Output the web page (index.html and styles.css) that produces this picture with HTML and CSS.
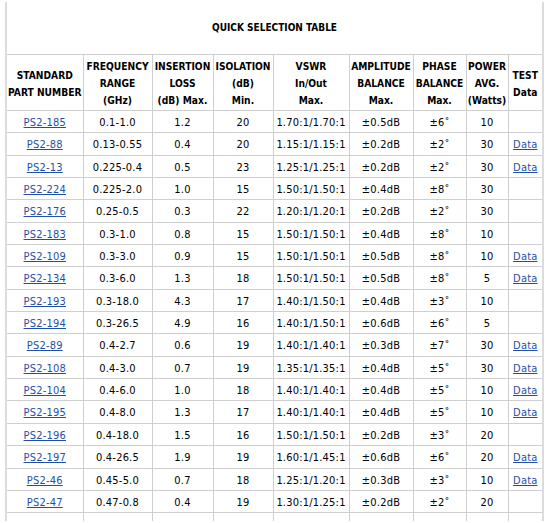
FILE: index.html
```html
<!DOCTYPE html>
<html>
<head>
<meta charset="utf-8">
<link rel="stylesheet" href="styles.css">
</head>
<body>
<div class="wrap">
<table class="qst">
  <colgroup>
    <col class="c1"><col class="c2"><col class="c3"><col class="c4"><col class="c5"><col class="c6"><col class="c7"><col class="c8"><col class="c9">
  </colgroup>
  <tr class="title"><td colspan="9">QUICK SELECTION TABLE</td></tr>
  <tr class="head">
    <th>STANDARD<br>PART NUMBER</th>
    <th>FREQUENCY<br>RANGE<br>(GHz)</th>
    <th>INSERTION<br>LOSS<br>(dB) Max.</th>
    <th>ISOLATION<br>(dB)<br>Min.</th>
    <th>VSWR<br>In/Out<br>Max.</th>
    <th>AMPLITUDE<br>BALANCE<br>Max.</th>
    <th>PHASE<br>BALANCE<br>Max.</th>
    <th>POWER<br>AVG.<br>(Watts)</th>
    <th>TEST<br>Data</th>
  </tr>
  <tr><td><a href="#">PS2-185</a></td><td>0.1-1.0</td><td>1.2</td><td>20</td><td>1.70:1/1.70:1</td><td>±0.5dB</td><td>±6˚</td><td>10</td><td></td></tr>
  <tr><td><a href="#">PS2-88</a></td><td>0.13-0.55</td><td>0.4</td><td>20</td><td>1.15:1/1.15:1</td><td>±0.2dB</td><td>±2˚</td><td>30</td><td><a href="#">Data</a></td></tr>
  <tr><td><a href="#">PS2-13</a></td><td>0.225-0.4</td><td>0.5</td><td>23</td><td>1.25:1/1.25:1</td><td>±0.2dB</td><td>±2˚</td><td>30</td><td><a href="#">Data</a></td></tr>
  <tr><td><a href="#">PS2-224</a></td><td>0.225-2.0</td><td>1.0</td><td>15</td><td>1.50:1/1.50:1</td><td>±0.4dB</td><td>±8˚</td><td>30</td><td></td></tr>
  <tr><td><a href="#">PS2-176</a></td><td>0.25-0.5</td><td>0.3</td><td>22</td><td>1.20:1/1.20:1</td><td>±0.2dB</td><td>±2˚</td><td>30</td><td></td></tr>
  <tr><td><a href="#">PS2-183</a></td><td>0.3-1.0</td><td>0.8</td><td>15</td><td>1.50:1/1.50:1</td><td>±0.4dB</td><td>±8˚</td><td>10</td><td></td></tr>
  <tr><td><a href="#">PS2-109</a></td><td>0.3-3.0</td><td>0.9</td><td>15</td><td>1.50:1/1.50:1</td><td>±0.5dB</td><td>±8˚</td><td>10</td><td><a href="#">Data</a></td></tr>
  <tr><td><a href="#">PS2-134</a></td><td>0.3-6.0</td><td>1.3</td><td>18</td><td>1.50:1/1.50:1</td><td>±0.5dB</td><td>±8˚</td><td>5</td><td><a href="#">Data</a></td></tr>
  <tr><td><a href="#">PS2-193</a></td><td>0.3-18.0</td><td>4.3</td><td>17</td><td>1.40:1/1.50:1</td><td>±0.4dB</td><td>±3˚</td><td>10</td><td></td></tr>
  <tr><td><a href="#">PS2-194</a></td><td>0.3-26.5</td><td>4.9</td><td>16</td><td>1.40:1/1.50:1</td><td>±0.6dB</td><td>±6˚</td><td>5</td><td></td></tr>
  <tr><td><a href="#">PS2-89</a></td><td>0.4-2.7</td><td>0.6</td><td>19</td><td>1.40:1/1.40:1</td><td>±0.3dB</td><td>±7˚</td><td>30</td><td><a href="#">Data</a></td></tr>
  <tr><td><a href="#">PS2-108</a></td><td>0.4-3.0</td><td>0.7</td><td>19</td><td>1.35:1/1.35:1</td><td>±0.4dB</td><td>±5˚</td><td>30</td><td><a href="#">Data</a></td></tr>
  <tr><td><a href="#">PS2-104</a></td><td>0.4-6.0</td><td>1.0</td><td>18</td><td>1.40:1/1.40:1</td><td>±0.4dB</td><td>±5˚</td><td>10</td><td><a href="#">Data</a></td></tr>
  <tr><td><a href="#">PS2-195</a></td><td>0.4-8.0</td><td>1.3</td><td>17</td><td>1.40:1/1.40:1</td><td>±0.4dB</td><td>±5˚</td><td>10</td><td><a href="#">Data</a></td></tr>
  <tr><td><a href="#">PS2-196</a></td><td>0.4-18.0</td><td>1.5</td><td>16</td><td>1.50:1/1.50:1</td><td>±0.2dB</td><td>±3˚</td><td>20</td><td></td></tr>
  <tr><td><a href="#">PS2-197</a></td><td>0.4-26.5</td><td>1.9</td><td>19</td><td>1.60:1/1.45:1</td><td>±0.6dB</td><td>±6˚</td><td>20</td><td><a href="#">Data</a></td></tr>
  <tr><td><a href="#">PS2-46</a></td><td>0.45-5.0</td><td>0.7</td><td>18</td><td>1.25:1/1.20:1</td><td>±0.3dB</td><td>±3˚</td><td>10</td><td><a href="#">Data</a></td></tr>
  <tr><td><a href="#">PS2-47</a></td><td>0.47-0.8</td><td>0.4</td><td>19</td><td>1.30:1/1.25:1</td><td>±0.2dB</td><td>±2˚</td><td>20</td><td></td></tr>
  <tr class="spacer"><td></td><td></td><td></td><td></td><td></td><td></td><td></td><td></td><td></td></tr>
</table>
</div>
</body>
</html>
```
FILE: styles.css
```css
html, body {
  margin: 0;
  padding: 0;
  background: #fff;
}
body {
  padding: 2px 0 0 5px;
  font-family: "DejaVu Sans Condensed", "DejaVu Sans", sans-serif;
  font-size: 11px;
  color: #000;
}
.wrap {
  width: 535px;
  border-left: 2px solid #dcdcdc;
  border-right: 2px solid #dcdcdc;
}
.qst {
  width: 535px;
  border-collapse: collapse;
  table-layout: fixed;
}
.c1 { width: 76px; }
.c2 { width: 69px; }
.c3 { width: 61px; }
.c4 { width: 60px; }
.c5 { width: 76px; }
.c6 { width: 64px; }
.c7 { width: 53px; }
.c8 { width: 42px; }
.c9 { width: 34px; }
.qst td, .qst th {
  border: 1px solid #cfcfcf;
  text-align: center;
  vertical-align: middle;
  padding: 4px 0 2px;
  line-height: 15.35px;
  white-space: nowrap;
  letter-spacing: 0.2px;
}
.qst tr:first-child td { border-top: none; }
.qst td:first-child, .qst th:first-child { border-left: none; }
.qst td:last-child, .qst th:last-child { border-right: none; }
.qst .title td {
  height: 52px;
  padding: 0;
  font-weight: bold;
  font-size: 10px;
  letter-spacing: 0;
}
.qst .head th {
  font-weight: bold;
  font-size: 10.2px;
  line-height: 17px;
  padding: 3px 0 1px;
  letter-spacing: 0;
  color: #000;
}
.qst a {
  color: #1f4fa8;
  text-decoration: underline;
}
.qst .spacer td {
  height: 8px;
  padding: 0;
  border-bottom: none;
}
```
